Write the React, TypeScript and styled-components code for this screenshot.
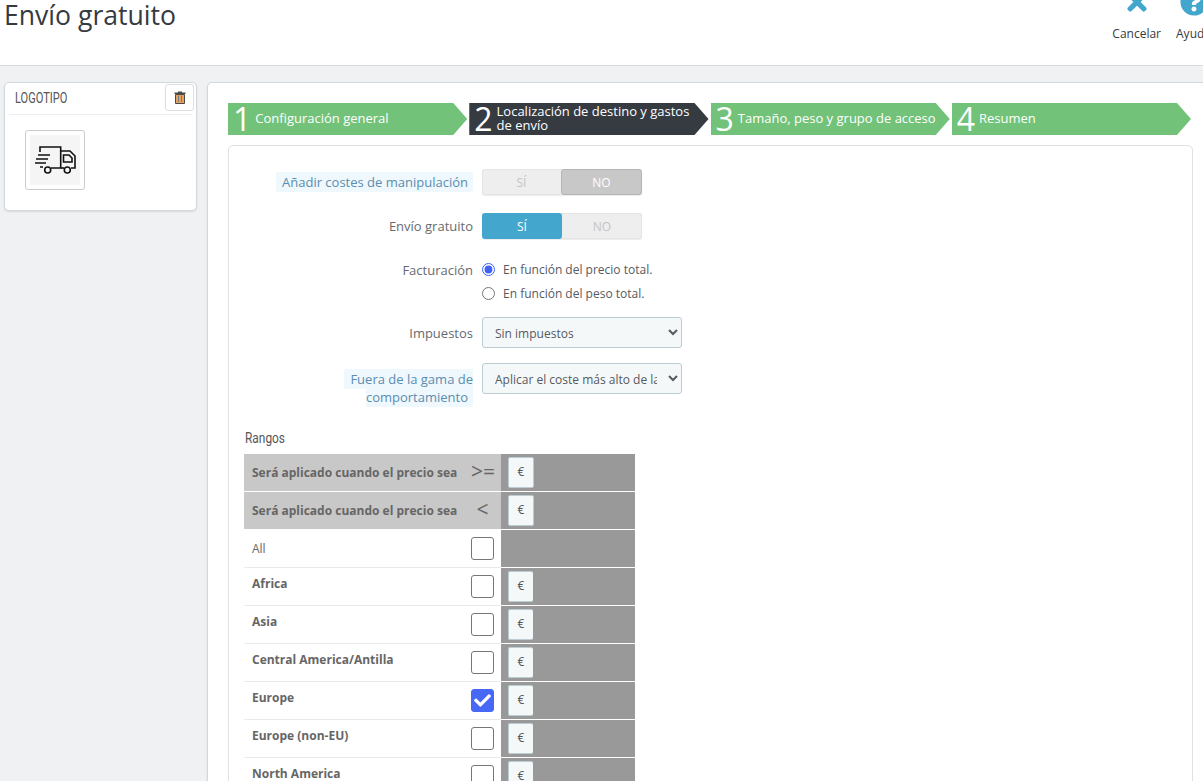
import React from "react";
import styled, { createGlobalStyle } from "styled-components";
import { FaTimes, FaQuestionCircle, FaCheck } from "react-icons/fa";

const Global = createGlobalStyle`
  html, body { margin: 0; padding: 0; height: 781px; overflow: hidden; background: #eff1f2; }
  body { font-family: "Open Sans", "Liberation Sans", sans-serif; color: #363a41; }
  * { box-sizing: border-box; }
`;

const Page = styled.div`
  width: 1203px;
  height: 781px;
  overflow: hidden;
  display: flex;
  flex-direction: column;
`;

const Header = styled.header`
  flex: none;
  height: 66px;
  background: #fff;
  border-bottom: 1px solid #d8dcdd;
  display: flex;
  justify-content: space-between;
  align-items: flex-start;
  padding-left: 4px;
  overflow: hidden;
`;

const Title = styled.h1`
  margin: 0;
  font-size: 26.6px;
  line-height: 31px;
  font-weight: 400;
  color: #363a41;
`;

const Toolbar = styled.div`
  display: flex;
  gap: 15px;
  margin-right: -8px;
  margin-top: -12px;
`;

const ToolButton = styled.div`
  display: flex;
  flex-direction: column;
  align-items: center;
  font-size: 12px;
  line-height: 16px;
  color: #363a41;
  svg {
    width: 28px;
    height: 28px;
    color: #43a7cd;
    margin-bottom: 10px;
    flex: none;
  }
`;

const Main = styled.main`
  flex: 1;
  min-height: 0;
  display: flex;
  align-items: flex-start;
  gap: 10px;
  padding: 16px 0 0 4px;
`;

const Card = styled.section`
  background: #fff;
  border: 1px solid #d3d8db;
  border-radius: 5px;
  box-shadow: 0 1px 2px rgba(0, 0, 0, 0.1);
`;

const LogoCard = styled(Card)`
  flex: none;
  width: 193px;
  height: 129px;
  padding: 1px 3px 0 4px;
`;

const LogoHead = styled.div`
  height: 31px;
  display: flex;
  justify-content: space-between;
  align-items: flex-start;
  border-bottom: 1px solid #eceeef;
  margin-right: 1px;
  padding-left: 6px;
`;

const LogoTitle = styled.h2`
  margin: 0;
  font-family: "Roboto", sans-serif;
  font-size: 14px;
  line-height: 29px;
  font-weight: 400;
  color: #555;
  text-transform: uppercase;
  transform: scaleX(0.79);
  transform-origin: left center;
`;

const IconButton = styled.button`
  width: 29px;
  height: 27px;
  margin-right: -2px;
  padding: 0;
  background: #fff;
  border: 1px solid #dcdfe0;
  border-radius: 3px;
  display: flex;
  align-items: center;
  justify-content: center;
  svg { display: block; }
`;

const Thumb = styled.div`
  width: 60px;
  height: 60px;
  margin: 15px 0 0 16px;
  padding: 4px;
  border: 1px solid #c9cccd;
  border-radius: 3px;
  background: #fff;
`;

const ThumbImage = styled.div`
  width: 50px;
  height: 50px;
  background: #f5f5f5;
  svg { display: block; }
`;

const WizardCard = styled(Card)`
  flex: none;
  width: 1007px;
  height: 800px;
  padding: 20px 20px 0;
`;

const Steps = styled.ol`
  list-style: none;
  margin: 0;
  padding: 0;
  width: 963px;
  display: grid;
  grid-template-columns: repeat(4, 1fr);
  gap: 2px;
`;

const Step = styled.li<{ $active?: boolean }>`
  height: 32px;
  background: ${(p) => (p.$active ? "#363a41" : "#72c279")};
  clip-path: polygon(0 0, calc(100% - 14px) 0, 100% 50%, calc(100% - 14px) 100%, 0 100%);
  display: flex;
  align-items: center;
  color: #fff;
  padding-left: 5px;
`;

const StepNumber = styled.span`
  font-size: 32px;
  line-height: 32px;
  font-weight: 400;
  margin-right: 4px;
`;

const StepText = styled.span`
  font-size: 13px;
  line-height: 14px;
  padding: 0 8px 3px 0;
`;

const FormCard = styled.div`
  width: 965px;
  height: 700px;
  margin-top: 10px;
  border: 1px solid #dfe1e2;
  border-radius: 5px;
  padding: 23px 15px 0;
`;

const FormRow = styled.div<{ $mb: number }>`
  display: flex;
  align-items: flex-start;
  gap: 9px;
  margin-bottom: ${(p) => p.$mb}px;
`;

const Label = styled.div<{ $pt: number }>`
  flex: none;
  width: 229px;
  text-align: right;
  font-size: 13px;
  line-height: 18px;
  color: #666b70;
  padding-top: ${(p) => p.$pt}px;
`;

const Hint = styled.span`
  background: #eff8fc;
  color: #5b8db0;
  padding: 1px 5px 1px 6px;
  border-radius: 2px;
`;

const Switch = styled.div`
  width: 160px;
  height: 26px;
  display: flex;
  background: #eee;
  border-radius: 3px;
  box-shadow: inset 0 0 0 1px #e4e4e4, 0 1px 1px rgba(0, 0, 0, 0.08);
`;

const SwitchOption = styled.div<{ $on?: "gray" | "blue" }>`
  flex: 1;
  display: flex;
  align-items: center;
  justify-content: center;
  font-size: 12px;
  font-weight: 500;
  border-radius: 3px;
  color: ${(p) => (p.$on ? "#fff" : "#c3c3c3")};
  background: ${(p) => (p.$on === "blue" ? "#43a7cd" : p.$on === "gray" ? "#c8c8c8" : "transparent")};
  border: ${(p) => (p.$on === "gray" ? "1px solid #b5b5b5" : "none")};
`;

const RadioGroup = styled.div`
  display: flex;
  flex-direction: column;
  gap: 6px;
  padding-top: 2px;
`;

const RadioLabel = styled.label`
  display: flex;
  align-items: center;
  gap: 8px;
  height: 18px;
  font-size: 12px;
  color: #555a5f;
`;

const Radio = styled.input`
  width: 13px;
  height: 13px;
  margin: 0;
  accent-color: #3f62f5;
`;

const Select = styled.select`
  width: 200px;
  height: 31px;
  font-family: "Open Sans", sans-serif;
  font-size: 12px;
  color: #555a5f;
  background-color: #f5f8f9;
  border: 1px solid #bbcdd2;
  border-radius: 3px;
  padding: 2px 8px 0;
`;

const RangesTitle = styled.h3`
  margin: 0 0 6px 1px;
  font-family: "Roboto", sans-serif;
  font-size: 14px;
  line-height: 20px;
  font-weight: 400;
  color: #555;
  transform: scaleX(0.85);
  transform-origin: left center;
`;

const Ranges = styled.div`
  width: 391px;
  display: flex;
  flex-direction: column;
`;

const RangeRow = styled.div`
  display: grid;
  grid-template-columns: 257px 134px;
  height: 38px;
`;

const ZoneCell = styled.div<{ $head?: boolean }>`
  display: flex;
  justify-content: space-between;
  padding: 0 7px 0 8px;
  background: ${(p) => (p.$head ? "#c8c8c8" : "#fff")};
  border-bottom: 1px solid ${(p) => (p.$head ? "#fff" : "#eaeaea")};
`;

const ZoneName = styled.div<{ $variant: "head" | "plain" | "bold" }>`
  font-size: 12px;
  line-height: 16px;
  font-weight: ${(p) => (p.$variant === "plain" ? 400 : 700)};
  color: #666;
  padding-top: ${(p) => (p.$variant === "bold" ? 8 : 11)}px;
`;

const Operator = styled.div`
  width: 23px;
  text-align: center;
  font-size: 21px;
  line-height: 35px;
  font-weight: 400;
  color: #666;
`;

const Check = styled.div<{ $checked?: boolean }>`
  width: 23px;
  height: 23px;
  margin-top: 7px;
  border: 1px solid ${(p) => (p.$checked ? "#4668f5" : "#777")};
  border-radius: 3px;
  background: ${(p) => (p.$checked ? "#4668f5" : "#fff")};
  color: #fff;
  display: flex;
  align-items: center;
  justify-content: center;
  svg { display: block; width: 17px; height: 17px; }
`;

const PriceCell = styled.div`
  background: #999;
  border-bottom: 1px solid #fff;
  padding: 3px 0 0 7px;
`;

const Euro = styled.div<{ $cut?: boolean }>`
  width: ${(p) => (p.$cut ? 25 : 26)}px;
  height: 31px;
  padding-bottom: 2px;
  background: #f5f8f9;
  border: 1px solid #bbcdd2;
  border-right-width: ${(p) => (p.$cut ? 0 : 1)}px;
  border-radius: 2px;
  display: flex;
  align-items: center;
  justify-content: center;
  font-size: 12px;
  color: #555;
`;

const Truck = () => (
  <svg width="50" height="50" viewBox="0 0 50 50" fill="none" stroke="#111" strokeWidth="1.6">
    <path d="M10 17V12H30.7V33H21" />
    <path d="M31 16H40L45 21V33H41" />
    <path d="M34 33H31" />
    <path d="M33.5 20H39L42 23V27H33.5Z" />
    <circle cx="17.7" cy="35" r="3" />
    <circle cx="37.3" cy="35" r="3" />
    <path d="M8 20H20M6 24H18M5 28H16M10 32H13" />
  </svg>
);

const Trash = () => (
  <svg width="12" height="13" viewBox="0 0 12 13">
    <path d="M4 1.5V.5H8V1.5H11.5V3H.5V1.5Z" fill="#4a4a4a" />
    <path d="M1.5 3.5H10.5V12.5H1.5Z" fill="#e8a25c" stroke="#4a4a4a" />
    <path d="M4.5 4.5V11M7.5 4.5V11" stroke="#6b7f8c" strokeWidth="1" />
  </svg>
);

const zones = [
  { name: "Africa" },
  { name: "Asia" },
  { name: "Central America/Antilla" },
  { name: "Europe", checked: true },
  { name: "Europe (non-EU)" },
  { name: "North America" },
];

export default function App() {
  return (
    <Page>
      <Global />
      <Header>
        <Title>Envío gratuito</Title>
        <Toolbar>
          <ToolButton>
            <FaTimes />
            Cancelar
          </ToolButton>
          <ToolButton>
            <FaQuestionCircle />
            Ayuda
          </ToolButton>
        </Toolbar>
      </Header>
      <Main>
        <LogoCard>
          <LogoHead>
            <LogoTitle>Logotipo</LogoTitle>
            <IconButton aria-label="Eliminar">
              <Trash />
            </IconButton>
          </LogoHead>
          <Thumb>
            <ThumbImage>
              <Truck />
            </ThumbImage>
          </Thumb>
        </LogoCard>
        <WizardCard>
          <Steps>
            <Step>
              <StepNumber>1</StepNumber>
              <StepText>Configuración general</StepText>
            </Step>
            <Step $active>
              <StepNumber>2</StepNumber>
              <StepText>Localización de destino y gastos de envío</StepText>
            </Step>
            <Step>
              <StepNumber>3</StepNumber>
              <StepText>Tamaño, peso y grupo de acceso</StepText>
            </Step>
            <Step>
              <StepNumber>4</StepNumber>
              <StepText>Resumen</StepText>
            </Step>
          </Steps>
          <FormCard>
            <FormRow $mb={18}>
              <Label $pt={4}>
                <Hint>Añadir costes de manipulación</Hint>
              </Label>
              <Switch>
                <SwitchOption>SÍ</SwitchOption>
                <SwitchOption $on="gray">NO</SwitchOption>
              </Switch>
            </FormRow>
            <FormRow $mb={19}>
              <Label $pt={4}>Envío gratuito</Label>
              <Switch>
                <SwitchOption $on="blue">SÍ</SwitchOption>
                <SwitchOption>NO</SwitchOption>
              </Switch>
            </FormRow>
            <FormRow $mb={15}>
              <Label $pt={3}>Facturación</Label>
              <RadioGroup>
                <RadioLabel>
                  <Radio type="radio" name="billing" defaultChecked />
                  En función del precio total.
                </RadioLabel>
                <RadioLabel>
                  <Radio type="radio" name="billing" />
                  En función del peso total.
                </RadioLabel>
              </RadioGroup>
            </FormRow>
            <FormRow $mb={15}>
              <Label $pt={7}>Impuestos</Label>
              <Select defaultValue="none">
                <option value="none">Sin impuestos</option>
              </Select>
            </FormRow>
            <FormRow $mb={22}>
              <Label $pt={7}>
                <Hint>Fuera de la gama de comportamiento</Hint>
              </Label>
              <Select defaultValue="high">
                <option value="high">Aplicar el coste más alto de la gama definida</option>
              </Select>
            </FormRow>
            <RangesTitle>Rangos</RangesTitle>
            <Ranges>
              <RangeRow>
                <ZoneCell $head>
                  <ZoneName $variant="head">Será aplicado cuando el precio sea</ZoneName>
                  <Operator>&gt;=</Operator>
                </ZoneCell>
                <PriceCell>
                  <Euro>€</Euro>
                </PriceCell>
              </RangeRow>
              <RangeRow>
                <ZoneCell $head>
                  <ZoneName $variant="head">Será aplicado cuando el precio sea</ZoneName>
                  <Operator>&lt;</Operator>
                </ZoneCell>
                <PriceCell>
                  <Euro>€</Euro>
                </PriceCell>
              </RangeRow>
              <RangeRow>
                <ZoneCell>
                  <ZoneName $variant="plain">All</ZoneName>
                  <Check />
                </ZoneCell>
                <PriceCell />
              </RangeRow>
              {zones.map((z) => (
                <RangeRow key={z.name}>
                  <ZoneCell>
                    <ZoneName $variant="bold">{z.name}</ZoneName>
                    <Check $checked={z.checked}>{z.checked && <FaCheck />}</Check>
                  </ZoneCell>
                  <PriceCell>
                    <Euro $cut>€</Euro>
                  </PriceCell>
                </RangeRow>
              ))}
            </Ranges>
          </FormCard>
        </WizardCard>
      </Main>
    </Page>
  );
}
